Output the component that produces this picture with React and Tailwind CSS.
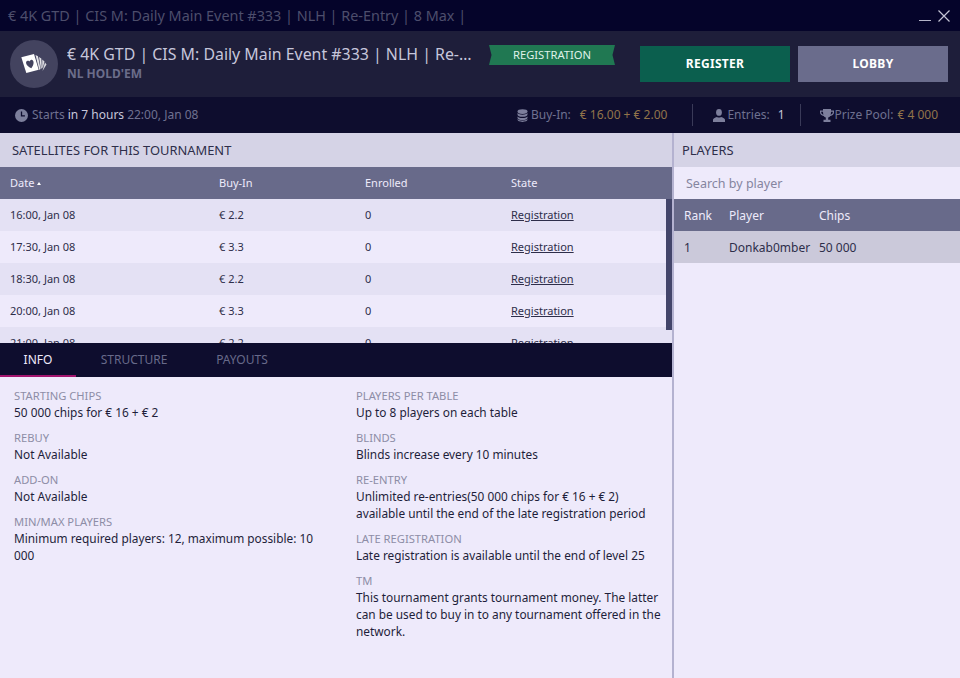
import React from "react";

const rows = [
  ["16:00, Jan 08", "€ 2.2"],
  ["17:30, Jan 08", "€ 3.3"],
  ["18:30, Jan 08", "€ 2.2"],
  ["20:00, Jan 08", "€ 3.3"],
  ["21:00, Jan 08", "€ 2.2"],
];

const leftInfo = [
  ["STARTING CHIPS", "50 000 chips for € 16 + € 2"],
  ["REBUY", "Not Available"],
  ["ADD-ON", "Not Available"],
  ["MIN/MAX PLAYERS", "Minimum required players: 12, maximum possible: 10 000"],
];
const rightInfo = [
  ["PLAYERS PER TABLE", "Up to 8 players on each table"],
  ["BLINDS", "Blinds increase every 10 minutes"],
  ["RE-ENTRY", "Unlimited re-entries(50 000 chips for € 16 + € 2) available until the end of the late registration period"],
  ["LATE REGISTRATION", "Late registration is available until the end of level 25"],
  ["TM", "This tournament grants tournament money. The latter can be used to buy in to any tournament offered in the network."],
];

function InfoGroup({ label, value }) {
  return (
    <div className="mb-[8px]">
      <div className="text-[11.2px] text-[#8d8da6] leading-[17px]">{label}</div>
      <div className="text-[11.85px] text-[#1e1e3a] leading-[17px]">{value}</div>
    </div>
  );
}

function Cards() {
  return (
    <svg width="28" height="26" viewBox="0 0 28 26" className="block">
      <g fill="#ffffff">
        <path d="M15.500 4L18 5.200 20.500 18 19.300 19z" opacity="0.85" />
        <path d="M19 6l2.300 1.500.5 9.500-.9 1z" opacity="0.85" />
        <path d="M22.300 8.500l2.200 2-1.800 7-.5-1.500z" opacity="0.8" />
        <path d="M25 11.500l1.500 2-4 6.500.5-2z" opacity="0.8" />
        <path d="M1.300 6.300L14 3l4.700 15.700L6.300 22z" />
      </g>
      <path transform="translate(10.200 13) rotate(-15) scale(1.250)" d="M0 3.500C-4 .5-3.500-3-1.500-3-.7-3 0-2.400 0-1.800 0-2.400.7-3 1.500-3 3.500-3 4 .5 0 3.500z" fill="#43435f" />
    </svg>
  );
}

function Clock() {
  return (
    <svg width="13" height="13" viewBox="0 0 13 13" className="block">
      <circle cx="6.5" cy="6.5" r="6.5" fill="#7d7f9c" />
      <path d="M6.5 2.6v4.2h3.4" stroke="#0e0d2e" strokeWidth="1.3" fill="none" />
    </svg>
  );
}

function Coins() {
  return (
    <svg width="11" height="13" viewBox="0 0 11 13" className="block">
      <g fill="#7d7f9c">
        <ellipse cx="5.5" cy="2.6" rx="5" ry="2.4" />
        <path d="M.5 4v1.4c0 1.3 2.2 2.4 5 2.4s5-1.1 5-2.4V4c-1 1-2.900 1.700-5 1.700S1.500 5 .5 4z" />
        <path d="M.5 7.400v1.400c0 1.300 2.200 2.400 5 2.400s5-1.100 5-2.400V7.400c-1 1-2.900 1.700-5 1.700s-4-.7-5-1.700z" />
        <path d="M.5 10v.6c0 1.300 2.200 2.300 5 2.300s5-1 5-2.300V10c-1 1-2.900 1.700-5 1.700S1.500 11 .5 10z" />
      </g>
    </svg>
  );
}

function User() {
  return (
    <svg width="12" height="13" viewBox="0 0 12 13" className="block">
      <g fill="#7d7f9c">
        <ellipse cx="6" cy="3.400" rx="2.900" ry="3.400" />
        <path d="M0 13v-2.200c0-1.400 1.800-2.300 4-2.900.9.700 3.100.7 4 0 2.200.6 4 1.500 4 2.900V13z" />
      </g>
    </svg>
  );
}

function Trophy() {
  return (
    <svg width="14" height="13" viewBox="0 0 14 13" className="block">
      <path d="M3 0h8v1.500h3v1.800c0 2-1.500 3.400-3.700 3.700-.5.800-1.200 1.300-2.100 1.500v2.300h2.300V13H3.500v-2.200h2.300V8.500C4.900 8.300 4.200 7.800 3.700 7 1.500 6.700 0 5.300 0 3.300V1.500h3zM1.200 2.700v.6c0 1.200.8 2.100 2.200 2.400-.3-.9-.4-2-.4-3zm11.600 0H11c0 1-.1 2.100-.4 3 1.400-.3 2.200-1.200 2.200-2.400z" fill="#7d7f9c" />
    </svg>
  );
}

export default function App() {
  return (
    <div className="w-[960px] h-[678px] overflow-hidden flex flex-col bg-[#eeeafb] text-[12px] font-['Noto_Sans',sans-serif]">
      {/* title bar */}
      <div className="h-[31px] shrink-0 bg-[#05042a] flex items-center pl-[8px] pr-[10px]">
        <span className="text-[14.4px] text-[#4d4e6c] whitespace-nowrap">€ 4K GTD | CIS M: Daily Main Event #333 | NLH | Re-Entry | 8 Max |</span>
        <div className="ml-auto flex items-center gap-[7px]">
          <svg width="12" height="12" viewBox="0 0 12 12" className="block"><path d="M0 10.500h12" stroke="#b5b5c8" strokeWidth="1" /></svg>
          <svg width="12" height="12" viewBox="0 0 12 12" className="block"><path d="M.5.500l11 11M11.500.500l-11 11" stroke="#c5c5d5" strokeWidth="1.200" /></svg>
        </div>
      </div>

      {/* header */}
      <div className="h-[66px] shrink-0 bg-[#1e1e3a] flex items-start pl-[10px] pr-[12px]">
        <div className="w-[48px] h-[48px] mt-[9px] rounded-full bg-[#43435f] flex items-center justify-center shrink-0">
          <Cards />
        </div>
        <div className="ml-[9px] w-[406px] mt-[12px] shrink-0">
          <div className="text-[15.9px] leading-[22px] text-[#c6c6da] whitespace-nowrap overflow-hidden text-ellipsis">€ 4K GTD | CIS M: Daily Main Event #333 | NLH | Re-Entry | 8 Max |</div>
          <div className="text-[12px] leading-[16px] font-bold text-[#6b6d8a] mt-[1px]">NL HOLD'EM</div>
        </div>
        <div className="ml-[16px] mt-[14px] w-[126px] h-[20px] shrink-0 bg-[#207852] text-[#dff2e8] text-[11.2px] leading-[20px] text-center [clip-path:polygon(0_0,100%_0,98%_50%,100%_100%,0_100%,2%_50%)]">REGISTRATION</div>
        <div className="ml-[25px] mt-[15px] w-[150px] h-[36px] shrink-0 bg-[#0b5f4e] text-white font-bold text-[12px] flex items-center justify-center tracking-[0.3px]">REGISTER</div>
        <div className="ml-[8px] mt-[15px] w-[150px] h-[36px] shrink-0 bg-[#6a6c8c] text-white font-bold text-[12px] flex items-center justify-center tracking-[0.3px]">LOBBY</div>
      </div>

      {/* info bar */}
      <div className="h-[36px] shrink-0 bg-[#0e0d2e] flex items-center pl-[15px] pr-[22px] text-[#6f7190]">
        <Clock />
        <span className="ml-[4px]">Starts</span>
        <span className="ml-[3px] text-[#c6c6da]">in 7 hours</span>
        <span className="ml-[3px]">22:00, Jan 08</span>
        <div className="ml-auto flex items-center">
          <Coins />
          <span className="ml-[3px]">Buy-In:</span>
          <span className="ml-[9px] text-[#92744a]">€ 16.00 + € 2.00</span>
          <div className="w-px h-[22px] bg-[#3a3a58] ml-[25px]" />
          <div className="ml-[20px]"><User /></div>
          <span className="ml-[2px]">Entries:</span>
          <span className="ml-[8px] text-[#c6c6da]">1</span>
          <div className="w-px h-[22px] bg-[#3a3a58] ml-[15px]" />
          <div className="ml-[19px]"><Trophy /></div>
          <span className="ml-[1px]">Prize Pool:</span>
          <span className="ml-[4px] text-[#92744a]">€ 4 000</span>
        </div>
      </div>

      {/* body */}
      <div className="flex-1 flex min-h-0">
        <div className="w-[672px] shrink-0 flex flex-col">
          <div className="h-[34px] shrink-0 bg-[#d5d3e6] flex items-center pl-[12px] pt-[2px] text-[12.9px] text-[#2e2e4a]">SATELLITES FOR THIS TOURNAMENT</div>
          <div className="h-[32px] shrink-0 bg-[#686a8a] text-[11px] text-[#eeeafb] flex items-center pl-[10px] pt-[1px]">
            <div className="w-[209px] flex items-center gap-[3px]">Date <span className="w-0 h-0 border-x-[2px] border-x-transparent border-b-[3px] border-b-white" /></div>
            <div className="w-[146px]">Buy-In</div>
            <div className="w-[146px]">Enrolled</div>
            <div>State</div>
          </div>
          <div className="relative h-[144px] shrink-0 overflow-hidden">
            {rows.map((r, i) => (
              <div key={i} className={`h-[32px] flex items-center pl-[10px] pt-[1px] text-[11px] text-[#2e2e4a] ${i % 2 === 0 ? "bg-[#e4e1f4]" : "bg-[#eeeafb]"}`}>
                <div className="w-[209px]">{r[0]}</div>
                <div className="w-[146px]">{r[1]}</div>
                <div className="w-[146px]">0</div>
                <div className="underline">Registration</div>
              </div>
            ))}
            <div className="absolute right-0 top-0 w-[6px] h-[131px] bg-[#43456a]" />
          </div>
          <div className="h-[34px] shrink-0 bg-[#0e0d2e] flex text-[#686a8a]">
            <div className="w-[76px] flex items-center justify-center pt-[2px] text-[#eeeafb] border-b-2 border-[#a3156f]">INFO</div>
            <div className="w-[116px] flex items-center justify-center">STRUCTURE</div>
            <div className="w-[100px] flex items-center justify-center">PAYOUTS</div>
          </div>
          <div className="flex-1 flex pl-[14px] pt-[10px] pr-[8px]">
            <div className="w-[342px] pr-[30px] shrink-0">
              {leftInfo.map((g) => <InfoGroup key={g[0]} label={g[0]} value={g[1]} />)}
            </div>
            <div className="flex-1">
              {rightInfo.map((g) => <InfoGroup key={g[0]} label={g[0]} value={g[1]} />)}
            </div>
          </div>
        </div>
        <div className="w-[2px] shrink-0 bg-[#b4b2d0]" />
        <div className="flex-1 flex flex-col">
          <div className="h-[34px] shrink-0 bg-[#d5d3e6] flex items-center pl-[8px] pt-[2px] text-[12.9px] text-[#2e2e4a]">PLAYERS</div>
          <div className="h-[32px] shrink-0 flex items-center pl-[12px] pt-[2px] text-[12.5px] text-[#85859f]">Search by player</div>
          <div className="h-[32px] shrink-0 bg-[#686a8a] text-[#eeeafb] flex items-center pl-[10px] pt-[1px] text-[12px]">
            <div className="w-[45px]">Rank</div>
            <div className="w-[90px]">Player</div>
            <div>Chips</div>
          </div>
          <div className="h-[32px] shrink-0 bg-[#cbc9da] text-[#2e2e4a] flex items-center pl-[10px] pt-[1px]">
            <div className="w-[45px]">1</div>
            <div className="w-[90px]">Donkab0mber</div>
            <div>50 000</div>
          </div>
        </div>
      </div>
    </div>
  );
}
